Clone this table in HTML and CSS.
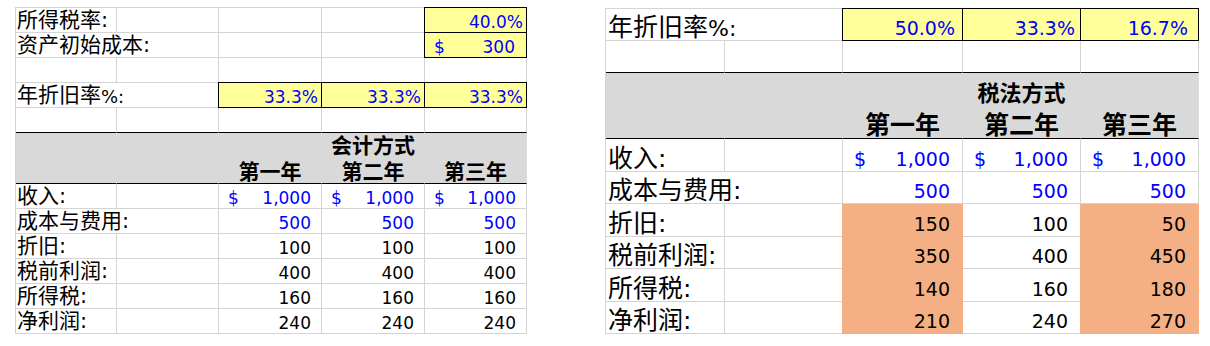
FILE: index.html
```html
<!DOCTYPE html>
<html lang="zh">
<head>
<meta charset="utf-8">
<title>折旧计算</title>
<link rel="stylesheet" href="styles.css">
</head>
<body>
<div class="page">
  <div class="sheet s1">
    <div class="c lab">所得税率:</div>
    <div class="c"></div><div class="c"></div><div class="c"></div>
    <div class="c num pct y">40.0%</div>

    <div class="c lab span2">资产初始成本:</div>
    <div class="c"></div><div class="c"></div>
    <div class="c num acc y pr11"><span>$</span><span>300</span></div>

    <div class="c"></div><div class="c"></div><div class="c"></div><div class="c"></div><div class="c"></div>

    <div class="c lab span2">年折旧率 <span class="lat">%:</span></div>
    <div class="c num pct y">33.3%</div>
    <div class="c num pct y">33.3%</div>
    <div class="c num pct y">33.3%</div>

    <div class="c bb"></div><div class="c bb"></div><div class="c bb"></div><div class="c bb"></div><div class="c bb"></div>

    <div class="c h"></div><div class="c h"></div><div class="c h"></div>
    <div class="c h t1">会计方式</div>
    <div class="c h"></div>

    <div class="c h hb"></div><div class="c h hb"></div>
    <div class="c h hb t1">第一年</div>
    <div class="c h hb t1">第二年</div>
    <div class="c h hb t1">第三年</div>

    <div class="c lab">收入:</div><div class="c"></div>
    <div class="c num acc blue"><span>$</span><span>1,000</span></div>
    <div class="c num acc blue"><span>$</span><span>1,000</span></div>
    <div class="c num acc blue"><span>$</span><span>1,000</span></div>

    <div class="c lab span2">成本与费用:</div>
    <div class="c num val blue">500</div>
    <div class="c num val blue">500</div>
    <div class="c num val blue">500</div>

    <div class="c lab">折旧:</div><div class="c"></div>
    <div class="c num val">100</div><div class="c num val">100</div><div class="c num val">100</div>

    <div class="c lab">税前利润:</div><div class="c"></div>
    <div class="c num val">400</div><div class="c num val">400</div><div class="c num val">400</div>

    <div class="c lab">所得税:</div><div class="c"></div>
    <div class="c num val">160</div><div class="c num val">160</div><div class="c num val">160</div>

    <div class="c lab">净利润:</div><div class="c"></div>
    <div class="c num val">240</div><div class="c num val">240</div><div class="c num val">240</div>
  </div>

  <div class="sheet s2">
    <div class="c lab span2">年折旧率 <span class="lat">%:</span></div>
    <div class="c num pct y pr7">50.0%</div>
    <div class="c num pct y">33.3%</div>
    <div class="c num pct y pr10">16.7%</div>

    <div class="c bb"></div><div class="c bb"></div><div class="c bb"></div><div class="c bb"></div><div class="c bb"></div>

    <div class="c h"></div><div class="c h"></div><div class="c h"></div>
    <div class="c h t2">税法方式</div>
    <div class="c h"></div>

    <div class="c h hb"></div><div class="c h hb"></div>
    <div class="c h hb t3">第一年</div>
    <div class="c h hb t3">第二年</div>
    <div class="c h hb t3">第三年</div>

    <div class="c lab">收入:</div><div class="c"></div>
    <div class="c num acc blue"><span>$</span><span>1,000</span></div>
    <div class="c num acc blue"><span>$</span><span>1,000</span></div>
    <div class="c num acc blue"><span>$</span><span>1,000</span></div>

    <div class="c lab span2">成本与费用:</div>
    <div class="c num val blue">500</div>
    <div class="c num val blue">500</div>
    <div class="c num val blue">500</div>

    <div class="c lab">折旧:</div><div class="c"></div>
    <div class="c num val o">150</div><div class="c num val">100</div><div class="c num val o">50</div>

    <div class="c lab">税前利润:</div><div class="c"></div>
    <div class="c num val o">350</div><div class="c num val">400</div><div class="c num val o">450</div>

    <div class="c lab">所得税:</div><div class="c"></div>
    <div class="c num val o">140</div><div class="c num val">160</div><div class="c num val o">180</div>

    <div class="c lab">净利润:</div><div class="c"></div>
    <div class="c num val o">210</div><div class="c num val">240</div><div class="c num val o">270</div>
  </div>
</div>
</body>
</html>
```

FILE: styles.css
```css
* {
  box-sizing: border-box;
  margin: 0;
  padding: 0;
}

body {
  background: #ffffff;
  color: #000000;
  font-family: "DejaVu Sans", "Noto Sans CJK SC", sans-serif;
}

.page {
  display: flex;
  align-items: flex-start;
  gap: 78px;
  padding: 7px 0 0 15px;
}

.sheet {
  display: grid;
  border-top: 1px solid #d4d4d4;
  border-left: 1px solid #d4d4d4;
}

.s1 {
  grid-template-columns: 101px 102px 103px 103px 102px;
  grid-template-rows: repeat(5, 25px) 25px 26px repeat(6, 25px);
  font-size: 17px;
}

.s2 {
  margin-top: 1px;
  grid-template-columns: 119px 118px 120px 118px 118px;
  grid-template-rows: 32px 32px 33px 33px 33px 32px 33px 32px 33px 32px;
  font-size: 19px;
}

.c {
  display: flex;
  align-items: flex-end;
  border-right: 1px solid #d4d4d4;
  border-bottom: 1px solid #d4d4d4;
  line-height: 1;
  white-space: nowrap;
}

.span2 {
  grid-column: span 2;
}

/* labels */
.lab {
  padding-left: 1px;
  padding-bottom: 1px;
}

.s1 .lab {
  font-size: 21px;
}

.s2 .lab {
  font-size: 25px;
  padding-left: 2px;
  padding-bottom: 0;
}

.lat {
  font-family: "DejaVu Sans", sans-serif;
}

.s1 .lab .lat {
  font-size: 18px;
}

.s2 .lab .lat {
  font-size: 22px;
}

/* numbers */
.num {
  padding-bottom: 1px;
}

.s2 .num {
  padding-bottom: 2px;
}

.pct {
  justify-content: flex-end;
  padding-right: 3px;
}

.s2 .pct {
  padding-right: 5px;
}

.s2 .pct.pr7 {
  padding-right: 7px;
}

.s2 .pct.pr10 {
  padding-right: 10px;
}

.val {
  justify-content: flex-end;
  padding-right: 10px;
}

.s2 .val {
  padding-right: 12px;
}

.acc {
  justify-content: space-between;
  padding-left: 9px;
  padding-right: 10px;
}

.acc.pr11 {
  padding-right: 11px;
}

.s2 .acc {
  padding-left: 11px;
  padding-right: 12px;
}

.blue,
.y {
  color: #0000ff;
}

/* input cells */
.y {
  background: #ffff99;
  border-right-color: #000000;
  border-bottom-color: #000000;
  box-shadow: -1px 0 0 #000000, 0 -1px 0 #000000, -1px -1px 0 #000000;
}

/* fills */
.o {
  background: #f4b084;
  border-right-color: #f4b084;
  border-bottom-color: #f4b084;
  box-shadow: -1px 0 0 #f4b084;
}

.bb {
  border-bottom-color: #000000;
}

/* header block */
.h {
  background: #d9d9d9;
  border-right-color: #d9d9d9;
  border-bottom-color: #d9d9d9;
  justify-content: center;
  font-weight: bold;
}

.h.hb {
  border-bottom-color: #000000;
}

.t1 {
  font-size: 21px;
}

.t2 {
  font-size: 22px;
}

.t3 {
  font-size: 25px;
}
```
